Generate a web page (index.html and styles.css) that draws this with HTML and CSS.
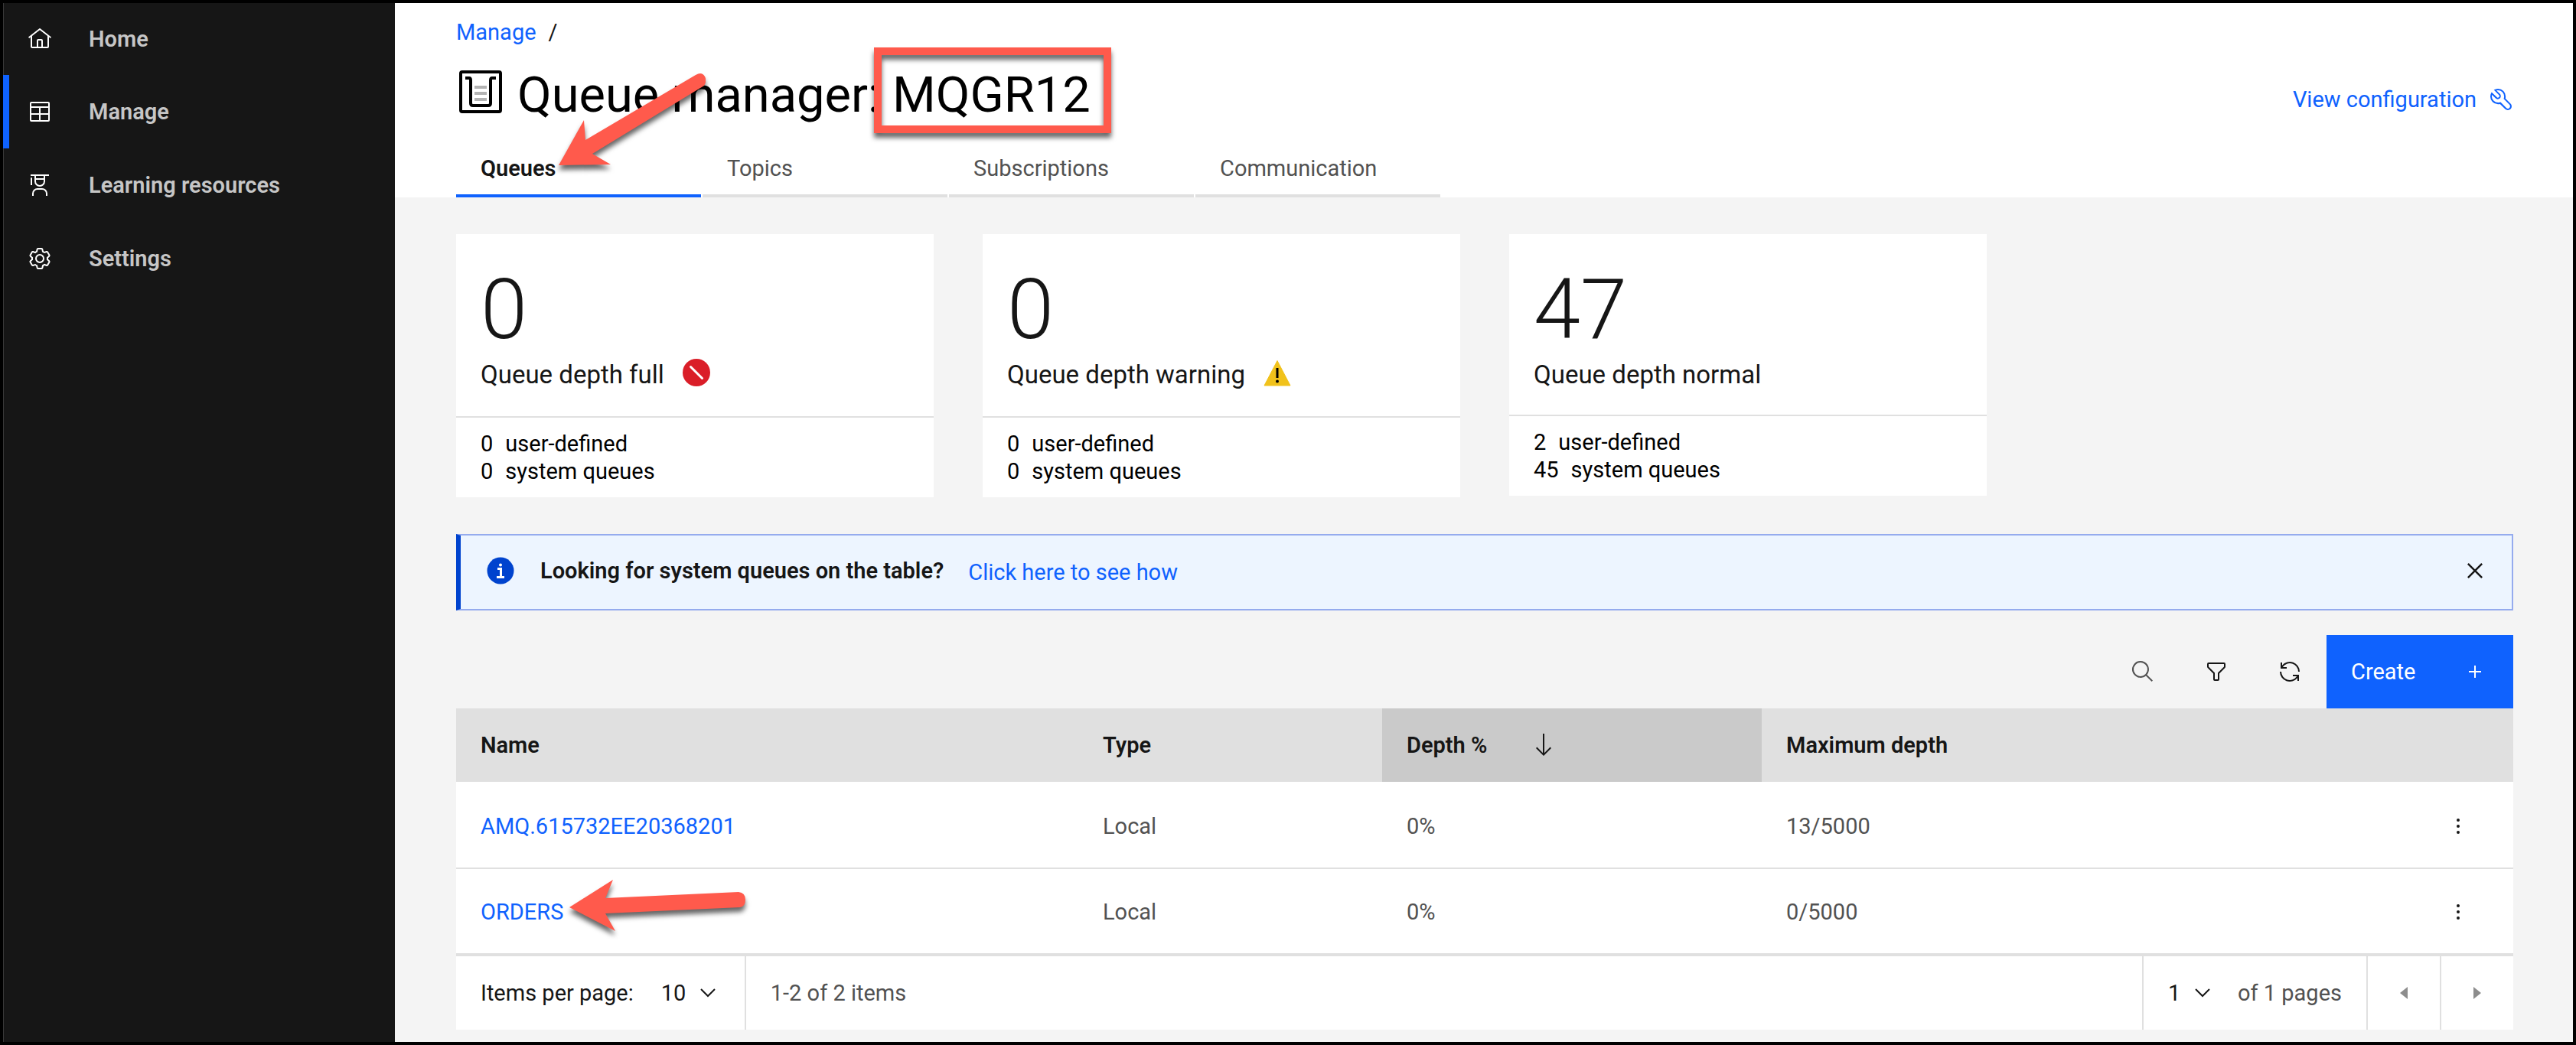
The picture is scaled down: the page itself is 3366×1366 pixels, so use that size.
FILE: index.html
```html
<!DOCTYPE html>
<html lang="en">
<head>
<meta charset="utf-8">
<title>Queue manager: MQGR12</title>
<link rel="stylesheet" href="styles.css">
</head>
<body>
<div class="frame">
  <nav class="sidebar" aria-label="Main">
    <a class="nav-item" href="#">
      <svg class="icon" viewBox="0 0 32 32" aria-hidden="true"><path d="M16.6 2.2a1 1 0 0 0-1.2 0L1 13.4 2.2 15 4 13.6V26a2 2 0 0 0 2 2h20a2 2 0 0 0 2-2V13.6l1.8 1.4 1.2-1.6zM18 26h-4v-8h4zm2 0v-8a2 2 0 0 0-2-2h-4a2 2 0 0 0-2 2v8H6V12l10-7.8L26 12v14z"/></svg>
      <span>Home</span>
    </a>
    <a class="nav-item nav-item-active" href="#" aria-current="page">
      <svg class="icon" viewBox="0 0 32 32" aria-hidden="true"><path d="M27 3H5a2 2 0 0 0-2 2v22a2 2 0 0 0 2 2h22a2 2 0 0 0 2-2V5a2 2 0 0 0-2-2zm0 2v4H5V5zM17 11h10v7H17zm-2 7H5v-7h10zM5 20h10v7H5zm12 7v-7h10v7z"/></svg>
      <span>Manage</span>
    </a>
    <a class="nav-item" href="#">
      <svg class="icon" viewBox="0 0 32 32" aria-hidden="true"><path d="M26 30h-2v-3a5 5 0 0 0-5-5h-6a5 5 0 0 0-5 5v3H6v-3a7 7 0 0 1 7-7h6a7 7 0 0 1 7 7zM5 6a1 1 0 0 0-1 1v9h2V7a1 1 0 0 0-1-1zM4 2v2h5v7a7 7 0 0 0 14 0V4h5V2zm7 2h10v3H11zm5 12a5 5 0 0 1-5-5V9h10v2a5 5 0 0 1-5 5z"/></svg>
      <span>Learning resources</span>
    </a>
    <a class="nav-item" href="#">
      <svg class="icon" viewBox="0 0 32 32" aria-hidden="true"><path d="M27 16.76v-1.53l1.92-1.68A2 2 0 0 0 29.3 11l-2.36-4a2 2 0 0 0-1.73-1 2 2 0 0 0-.64.1l-2.43.82a11.35 11.35 0 0 0-1.31-.75l-.51-2.52a2 2 0 0 0-2-1.61h-4.68a2 2 0 0 0-2 1.61l-.51 2.52a11.48 11.48 0 0 0-1.32.75l-2.38-.86A2 2 0 0 0 6.79 6a2 2 0 0 0-1.73 1L2.7 11a2 2 0 0 0 .41 2.51L5 15.24v1.53l-1.89 1.68A2 2 0 0 0 2.7 21l2.36 4a2 2 0 0 0 1.73 1 2 2 0 0 0 .64-.1l2.43-.82a11.35 11.35 0 0 0 1.31.75l.51 2.52a2 2 0 0 0 2 1.61h4.72a2 2 0 0 0 2-1.61l.51-2.52a11.48 11.48 0 0 0 1.32-.75l2.42.82a2 2 0 0 0 .64.1 2 2 0 0 0 1.73-1l2.28-4a2 2 0 0 0-.41-2.51zM25.21 24l-3.43-1.16a8.86 8.86 0 0 1-2.71 1.57L18.36 28h-4.72l-.71-3.55a9.36 9.36 0 0 1-2.7-1.57L6.79 24l-2.36-4 2.72-2.4a8.9 8.9 0 0 1 0-3.13L4.43 12l2.36-4 3.43 1.16a8.86 8.86 0 0 1 2.71-1.57L13.64 4h4.72l.71 3.55a9.36 9.36 0 0 1 2.7 1.57L25.21 8l2.36 4-2.72 2.4a8.9 8.9 0 0 1 0 3.13L27.57 20zM16 22a6 6 0 1 1 6-6 5.94 5.94 0 0 1-6 6zm0-10a3.91 3.91 0 0 0-4 4 3.91 3.91 0 0 0 4 4 3.91 3.91 0 0 0 4-4 3.91 3.91 0 0 0-4-4z"/></svg>
      <span>Settings</span>
    </a>
  </nav>

  <main class="main">
    <header class="page-header">
      <nav class="breadcrumb" aria-label="Breadcrumb"><a class="link" href="#">Manage</a><span>/</span></nav>
      <div class="title-row">
        <svg class="title-icon" viewBox="0 0 56 56" aria-hidden="true"><rect x="2" y="2" width="52" height="52" rx="2" fill="none" stroke="#000" stroke-width="4"/><path d="M8 10h5q2 0 2 3v30q0 3 3 3h20q3 0 3-3V13q0-3 2-3h5" fill="none" stroke="#000" stroke-width="4"/><path d="M20 22h16M20 30h16M20 38h16" stroke="#b3b3b3" stroke-width="4"/></svg>
        <h1 class="title">Queue manager: MQGR12</h1>
        <a class="link config-link" href="#">View configuration
          <svg class="icon" viewBox="0 0 32 32" aria-hidden="true"><path d="M12.1 2a9.8 9.8 0 0 0-5.4 1.6l6.4 6.4a2.1 2.1 0 0 1 .2 3 2.1 2.1 0 0 1-3-.2L3.7 6.4A10.8 10.8 0 0 0 2 12.1 10 10 0 0 0 12.1 22.2a10.9 10.9 0 0 0 2.6-.3l6.7 6.7a5 5 0 0 0 7.1-7.1l-6.7-6.7a10.9 10.9 0 0 0 .3-2.6A10.1 10.1 0 0 0 12.1 2zm8 10.1a7.6 7.6 0 0 1-.3 2.1l-.3 1.1.8.8 6.7 6.7a2.9 2.9 0 0 1 .9 2.1 2.9 2.9 0 0 1-5 2.1l-6.7-6.7-.8-.8-1.1.3a7.6 7.6 0 0 1-2.1.3 8.3 8.3 0 0 1-5.7-2.3A7.6 7.6 0 0 1 4 12.1a8.3 8.3 0 0 1 .3-2.2l4.4 4.4a4.14 4.14 0 0 0 5.9.2 4.1 4.1 0 0 0-.2-5.9L10 4.2a6.5 6.5 0 0 1 2-.3 8.3 8.3 0 0 1 5.7 2.3 8.5 8.5 0 0 1 2.4 5.9z"/></svg>
        </a>
      </div>
      <div class="tabs" role="tablist">
        <button class="tab tab-active" role="tab" aria-selected="true">Queues</button>
        <button class="tab" role="tab">Topics</button>
        <button class="tab" role="tab">Subscriptions</button>
        <button class="tab" role="tab">Communication</button>
      </div>
    </header>

    <div class="content">
      <section class="cards" aria-label="Queue depth">
        <article class="card">
          <div class="card-top">
            <div class="card-number">0</div>
            <div class="card-label">Queue depth full
              <svg class="status" viewBox="0 0 36 36" aria-hidden="true"><circle cx="18" cy="18" r="18" fill="#da1e28"/><path d="M10.5 10.5l15 15" stroke="#fff" stroke-width="3" stroke-linecap="round"/></svg>
            </div>
          </div>
          <div class="card-bottom"><div class="card-line"><span>0</span><span>user-defined</span></div><div class="card-line"><span>0</span><span>system queues</span></div></div>
        </article>
        <article class="card">
          <div class="card-top">
            <div class="card-number">0</div>
            <div class="card-label">Queue depth warning
              <svg class="status" viewBox="0 0 36 36" aria-hidden="true"><path d="M18 2.5L35 35H1z" fill="#f1c21b" stroke="#f1c21b" stroke-linejoin="round"/><path d="M18 12v13" stroke="#000" stroke-width="3"/><circle cx="18" cy="29.5" r="2" fill="#000"/></svg>
            </div>
          </div>
          <div class="card-bottom"><div class="card-line"><span>0</span><span>user-defined</span></div><div class="card-line"><span>0</span><span>system queues</span></div></div>
        </article>
        <article class="card">
          <div class="card-top card-top-plain">
            <div class="card-number">47</div>
            <div class="card-label">Queue depth normal</div>
          </div>
          <div class="card-bottom"><div class="card-line"><span>2</span><span>user-defined</span></div><div class="card-line"><span>45</span><span>system queues</span></div></div>
        </article>
      </section>

      <section class="notice">
        <svg class="notice-icon" viewBox="0 0 36 36" aria-hidden="true"><circle cx="18" cy="18" r="17.5" fill="#0043ce"/><circle cx="18" cy="10.5" r="2" fill="#fff"/><path d="M14 15.500h4.500v11M13 26.500h10" fill="none" stroke="#fff" stroke-width="3"/></svg>
        <strong class="notice-title">Looking for system queues on the table?</strong>
        <a class="link notice-link" href="#">Click here to see how</a>
        <button class="icon-button notice-close" aria-label="Close">
          <svg class="icon" viewBox="0 0 32 32" aria-hidden="true"><path d="M24 9.400L22.600 8 16 14.600 9.400 8 8 9.400l6.600 6.600L8 22.600 9.400 24l6.600-6.600 6.600 6.600 1.400-1.400-6.600-6.600z"/></svg>
        </button>
      </section>

      <div class="toolbar">
        <button class="icon-button search" aria-label="Search"><svg class="icon" viewBox="0 0 32 32" aria-hidden="true"><path d="M29 27.600l-7.600-7.600a11 11 0 1 0-1.400 1.400l7.600 7.600zM4 13a9 9 0 1 1 9 9 9 9 0 0 1-9-9z"/></svg></button>
        <button class="icon-button" aria-label="Filter"><svg class="icon" viewBox="0 0 32 32" aria-hidden="true"><path d="M18 28h-4a2 2 0 0 1-2-2v-7.600L4.600 11A2 2 0 0 1 4 9.600V6a2 2 0 0 1 2-2h20a2 2 0 0 1 2 2v3.600a2 2 0 0 1-.6 1.400L20 18.400V26a2 2 0 0 1-2 2zM6 6v3.600l8 8V26h4v-8.400l8-8V6z"/></svg></button>
        <button class="icon-button" aria-label="Refresh"><svg class="icon" viewBox="0 0 32 32" aria-hidden="true"><path d="M12 10H6.800A11 11 0 0 1 27 16h2A13 13 0 0 0 6 7.700V4H4v8h8zM20 22h5.200A11 11 0 0 1 5 16H3a13 13 0 0 0 23 8.300V28h2v-8h-8z"/></svg></button>
        <button class="create">Create
          <svg class="icon" viewBox="0 0 32 32" aria-hidden="true"><path d="M17 15V8h-2v7H8v2h7v7h2v-7h7v-2z"/></svg>
        </button>
      </div>

      <table class="table">
        <colgroup><col class="col-name"><col class="col-type"><col class="col-depth"><col><col class="col-menu"></colgroup>
        <thead>
          <tr>
            <th scope="col">Name</th>
            <th scope="col">Type</th>
            <th scope="col" class="sorted" aria-sort="descending"><button class="sort">Depth %
              <svg class="icon" viewBox="0 0 32 32" aria-hidden="true"><path d="M24.600 18.600L17 26.200V1h-2v25.200l-7.600-7.600L6 20l10 10 10-10z"/></svg></button></th>
            <th scope="col">Maximum depth</th>
            <td></td>
          </tr>
        </thead>
        <tbody>
          <tr>
            <td><a class="link" href="#">AMQ.615732EE20368201</a></td><td>Local</td><td>0%</td><td>13/5000</td>
            <td class="menu-cell"><button class="menu" aria-label="Options"><svg class="icon" viewBox="0 0 32 32" aria-hidden="true"><circle cx="16" cy="8" r="2"/><circle cx="16" cy="16" r="2"/><circle cx="16" cy="24" r="2"/></svg></button></td>
          </tr>
          <tr>
            <td><a class="link" href="#">ORDERS</a></td><td>Local</td><td>0%</td><td>0/5000</td>
            <td class="menu-cell"><button class="menu" aria-label="Options"><svg class="icon" viewBox="0 0 32 32" aria-hidden="true"><circle cx="16" cy="8" r="2"/><circle cx="16" cy="16" r="2"/><circle cx="16" cy="24" r="2"/></svg></button></td>
          </tr>
        </tbody>
      </table>

      <div class="pagination">
        <div class="page-size">
          <label for="page-size">Items per page:</label>
          <span class="select-wrap"><select id="page-size"><option>10</option></select><svg class="chevron" viewBox="0 0 20 12" aria-hidden="true"><path d="M1 1l9 9 9-9"/></svg></span>
        </div>
        <div class="range">1-2 of 2 items</div>
        <div class="page-number">
          <span class="select-wrap"><select id="page" aria-label="Page"><option>1</option></select><svg class="chevron" viewBox="0 0 20 12" aria-hidden="true"><path d="M1 1l9 9 9-9"/></svg></span>
          <label for="page">of 1 pages</label>
        </div>
        <button class="pager" aria-label="Previous page" disabled><svg class="caret" viewBox="0 0 10 16" aria-hidden="true"><path d="M10 0v16L0 8z"/></svg></button>
        <button class="pager" aria-label="Next page" disabled><svg class="caret" viewBox="0 0 10 16" aria-hidden="true"><path d="M0 0v16l10-8z"/></svg></button>
      </div>
    </div>
  </main>

  <div class="callout-box"></div>
  <svg class="callout callout-tab" viewBox="0 0 200 130" aria-hidden="true"><path d="M8 126L41 67l2 26L187 8q8-5 12 2 3 6-1 12L52 111l24 14z"/></svg>
  <svg class="callout callout-row" viewBox="0 0 240 76" aria-hidden="true"><path d="M8 44L65 8 55 32l174-8q9 1 9 10t-7 10L55 52l13 23z"/></svg>
</div>
</body>
</html>
```
FILE: styles.css
```css
* { box-sizing: border-box; }

body {
  margin: 0;
  font-family: Roboto, "Liberation Sans", sans-serif;
  font-size: 29px;
  line-height: 36px;
  color: #161616;
}

button, select {
  font: inherit;
  color: inherit;
  background: none;
  border: 0;
  padding: 0;
  margin: 0;
  text-align: left;
}

.frame {
  position: relative;
  display: flex;
  min-height: 100vh;
  border: 4px solid #000;
}

.icon {
  width: 32px;
  height: 32px;
  flex: none;
  fill: currentColor;
}

.link { color: #0f62fe; text-decoration: none; }

/* Sidebar */
.sidebar {
  width: 512px;
  flex: none;
  background: #161616;
  border-left: 1px solid #393939;
}

.nav-item {
  display: flex;
  align-items: center;
  gap: 48px;
  height: 96px;
  padding-left: 31px;
  color: #c6c6c6;
  font-weight: 600;
  text-decoration: none;
}

.nav-item:first-child { height: 94px; }
.nav-item .icon { color: #fff; }

.nav-item-active {
  margin-left: -1px;
  padding-left: 24px;
  border-left: 8px solid #0f62fe;
}

/* Header */
.main {
  flex: 1;
  min-width: 0;
  background: #f4f4f4;
}

.page-header {
  padding: 20px 78px 0 80px;
  background: #fff;
}

.breadcrumb { display: flex; gap: 16px; }

.title-row {
  display: flex;
  align-items: center;
  margin-top: 24px;
}

.title-icon { width: 56px; height: 56px; margin: 0 20px 8px 4px; }

.title {
  margin: 0;
  font-size: 65px;
  line-height: 80px;
  font-weight: 400;
  color: #000;
}

.config-link {
  display: flex;
  align-items: center;
  gap: 16px;
  margin-left: auto;
  padding-top: 12px;
}

.tabs { display: flex; gap: 2px; margin-top: 36px; }

.tab {
  width: 320px;
  padding: 2px 32px 16px;
  border-bottom: 4px solid #e0e0e0;
  color: #525252;
}

.tab-active {
  border-color: #0f62fe;
  color: #161616;
  font-weight: 600;
}

.content { padding: 48px 78px 16px 80px; }

/* Cards */
.cards { display: flex; align-items: flex-start; gap: 64px; }

.card { flex: 0 1 624px; background: #fff; }

.card-top {
  height: 240px;
  padding: 32px 32px 0;
  border-bottom: 2px solid #e0e0e0;
}

.card-top-plain { height: 238px; }

.card-number {
  font-size: 110px;
  line-height: 134px;
  font-weight: 300;
}

.card-label {
  display: flex;
  align-items: center;
  gap: 24px;
  height: 36px;
  font-size: 33px;
}

.status { width: 36px; height: 36px; margin-bottom: 6px; }

.card-bottom { padding: 16px 32px; color: #000; }
.card-line { display: flex; gap: 16px; }

/* Notice */
.notice {
  display: flex;
  align-items: center;
  height: 100px;
  margin-top: 48px;
  padding: 0 0 4px 34px;
  background: #edf5ff;
  border: 2px solid #95abee;
  border-left: 6px solid #0043ce;
}

.notice-icon { width: 36px; height: 36px; margin-right: 34px; }
.notice-title { font-weight: 600; }
.notice-link { margin-left: 32px; padding-top: 4px; }
.notice-close { margin-left: auto; }
.notice-close .icon { width: 40px; height: 40px; }

/* Toolbar */
.toolbar { display: flex; justify-content: flex-end; margin-top: 32px; }

.icon-button {
  display: flex;
  align-items: center;
  justify-content: center;
  width: 96px;
  height: 96px;
}

.search { color: #525252; }

.create {
  display: flex;
  align-items: center;
  justify-content: space-between;
  width: 244px;
  padding: 0 34px 0 32px;
  background: #0f62fe;
  color: #fff;
}

/* Table */
.table {
  width: 100%;
  table-layout: fixed;
  border-collapse: separate;
  border-spacing: 0;
  color: #525252;
}

.col-name { width: 813px; }
.col-type { width: 397px; }
.col-depth { width: 496px; }
.col-menu { width: 144px; }

.table th, .table td { padding: 0 32px; text-align: left; }

.table thead tr { height: 96px; background: #e0e0e0; color: #161616; }
.table th { font-weight: 600; }
.table .sorted { background: #cacaca; }

.sort {
  display: flex;
  align-items: center;
  gap: 58px;
}

.table tbody tr { height: 112px; background: #fff; }
.table tbody td { padding-top: 2px; border-bottom: 2px solid #e0e0e0; }
.table tbody tr:first-child { height: 114px; }
.table tbody tr:first-child td { padding-top: 4px; }

.table .menu-cell { padding-left: 56px; padding-right: 56px; }
.menu { display: flex; color: #161616; }

/* Pagination */
.pagination {
  display: flex;
  height: 98px;
  background: #fff;
  border-top: 2px solid #e0e0e0;
  color: #525252;
}

.page-size, .range, .page-number { display: flex; align-items: center; }

.page-size {
  gap: 36px;
  padding: 0 38px 0 32px;
  border-right: 2px solid #e0e0e0;
  color: #161616;
}

.range { flex: 1; padding-left: 32px; }

.page-number {
  gap: 36px;
  padding: 0 32px;
  border-left: 2px solid #e0e0e0;
}

.select-wrap { display: flex; align-items: center; gap: 18px; color: #161616; }
.select-wrap select { appearance: none; }

.chevron {
  width: 20px;
  height: 12px;
  fill: none;
  stroke: #161616;
  stroke-width: 2;
}

.pager {
  display: flex;
  align-items: center;
  justify-content: center;
  width: 96px;
  border-left: 2px solid #e0e0e0;
}

.caret { width: 10px; height: 16px; fill: #8d8d8d; }

/* Callouts drawn over the page */
.callout-box {
  position: absolute;
  left: 1138px;
  top: 58px;
  width: 310px;
  height: 112px;
  border: 10px solid #ff5a4c;
  filter: drop-shadow(0 6px 3px rgba(0, 0, 0, 0.6));
}

.callout {
  position: absolute;
  fill: #ff5a4c;
  filter: drop-shadow(0 6px 3px rgba(0, 0, 0, 0.6));
}

.callout-tab { left: 718px; top: 86px; width: 200px; height: 130px; }
.callout-row { left: 732px; top: 1138px; width: 240px; height: 76px; }
```
